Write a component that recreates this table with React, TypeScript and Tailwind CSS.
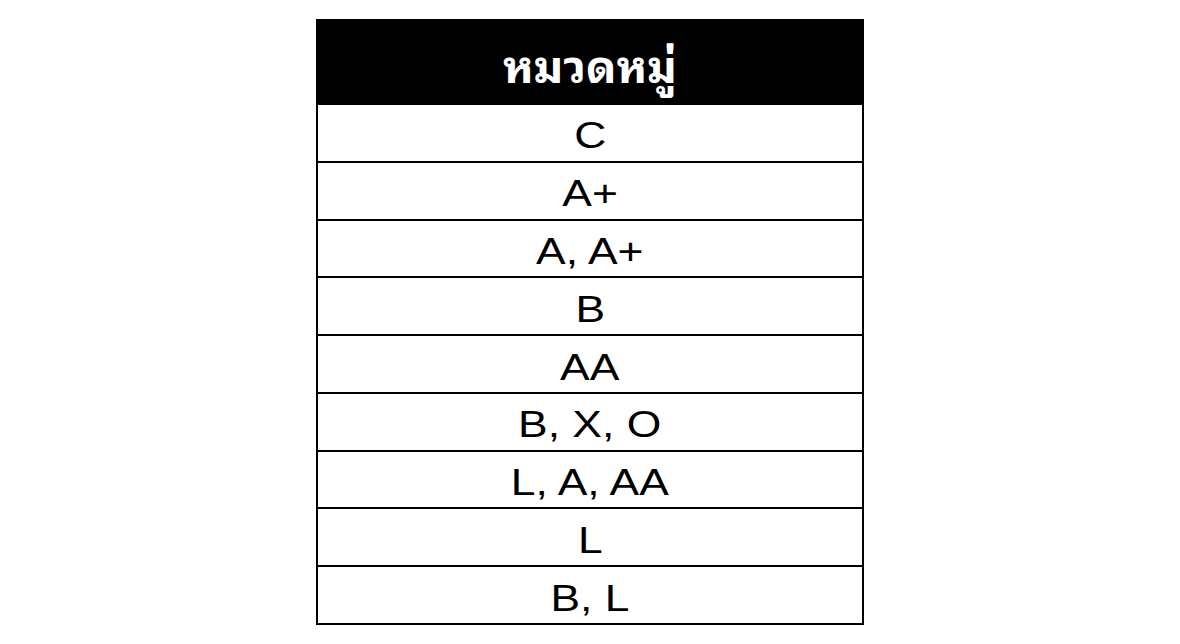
const rows = ['C', 'A+', 'A, A+', 'B', 'AA', 'B, X, O', 'L, A, AA', 'L', 'B, L'];

export default function App() {
  return (
    <div className="flex h-[644px] w-full justify-center bg-white pt-[19px]">
      <div className="flex h-[606px] w-[548px] flex-col border-2 border-black">
        <div className="flex h-[82px] shrink-0 items-center justify-center bg-black pt-[2px]">
          <span className="inline-block font-['Noto_Sans_Thai_Looped','Noto_Sans_Thai','Noto_Sans','Tahoma',sans-serif] text-[45px] font-bold leading-none text-white">
            หมวดหมู่
          </span>
        </div>
        {rows.map((r) => (
          <div
            key={r}
            className="flex flex-1 items-center justify-center border-t-2 border-black pt-[6px]"
          >
            <span className="inline-block origin-center scale-x-[1.2] font-['Liberation_Sans',Arial,sans-serif] text-[37px] leading-none text-black">
              {r}
            </span>
          </div>
        ))}
      </div>
    </div>
  );
}
